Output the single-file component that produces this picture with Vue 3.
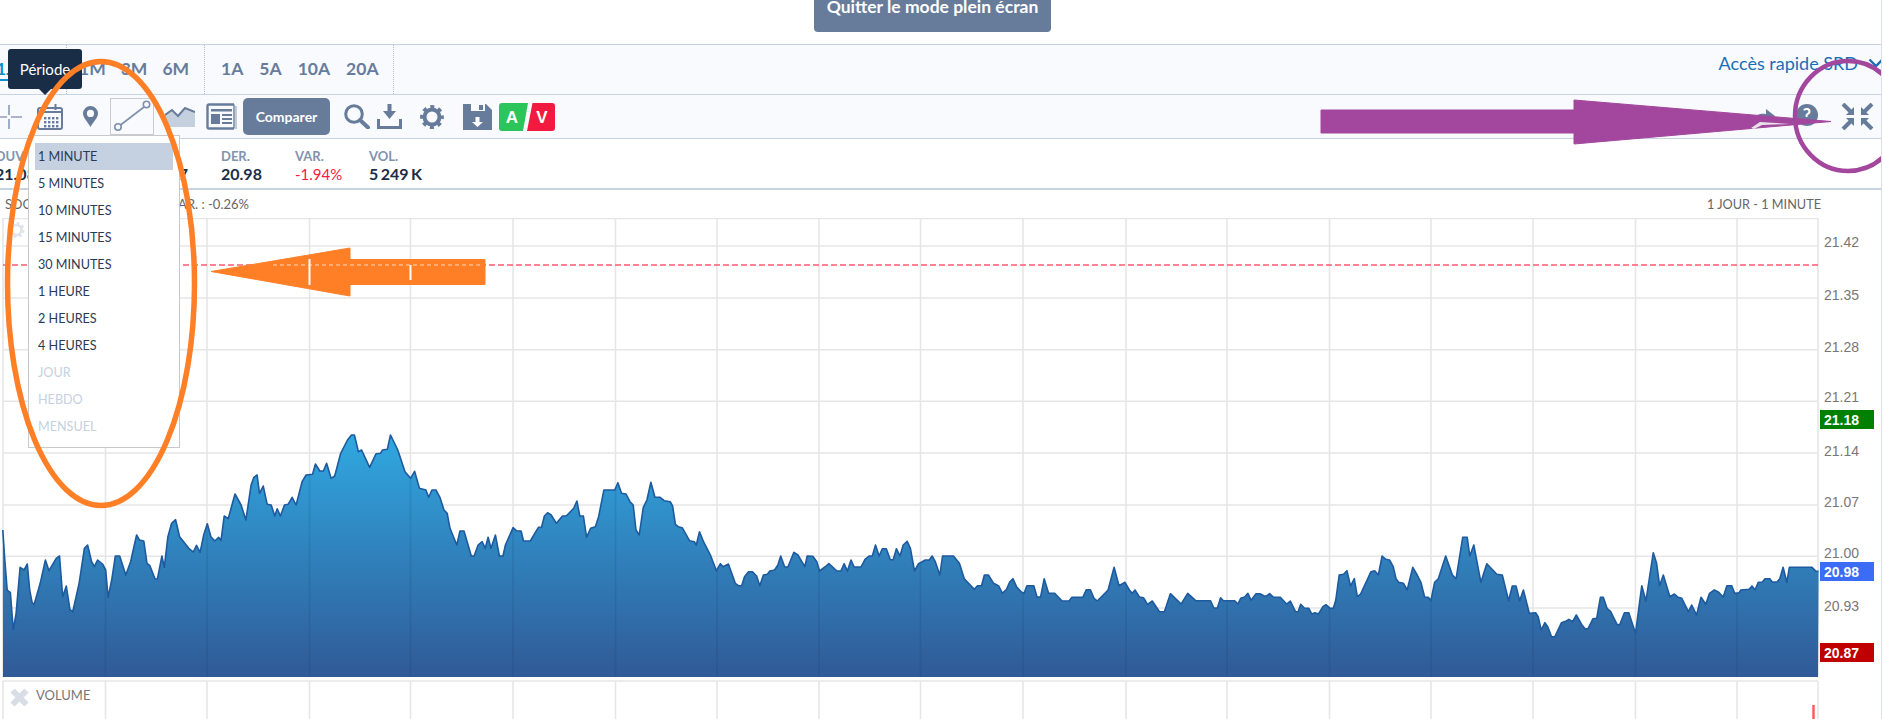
<script setup>
const seg1 = [[7,330],[12,420],[18,510],[26,518],[33,630],[40,580],[50,442],[60,450],[68,432],[74,510],[80,548],[85,553],[100,490],[113,420],[122,452],[140,415],[148,408],[156,530],[165,498],[174,568],[181,576],[197,490],[210,385],[218,375],[228,425],[235,440],[243,420],[255,432],[263,450],[269,532],[278,480],[287,408],[298,408],[313,465],[325,425],[340,345],[347,360],[358,363],[366,430],[373,437],[386,477],[392,476],[403,408],[409,442],[418,350],[427,310],[437,299],[447,350],[470,385],[481,396],[489,376],[498,397],[507,345],[516,311],[525,350],[535,363],[544,352],[550,362],[558,288],[568,296],[585,222],[600,255],[612,300],[625,195],[632,172],[640,165],[646,220],[655,198],[665,253],[675,255],[684,288],[690,266],[698,288],[708,255],[717,253],[727,232],[737,255],[752,185],[762,165],[778,163],[785,132],[796,153],[805,153],[813,130],[824,175],[833,168],[848,100],[865,60],[875,45],[882,45],[892,95],[900,90],[920,142],[936,101],[947,100],[952,90],[964,88],[972,45],[990,90],[1008,155],[1022,175],[1032,154],[1044,205],[1060,210],[1067,232],[1075,210],[1085,210],[1095,232],[1105,270],[1113,280],[1120,325],[1137,375],[1145,333],[1155,333],[1173,408],[1180,408],[1190,375],[1200,365],[1208,385],[1215,352],[1222,385],[1233,345],[1243,408],[1252,408],[1258,375],[1277,323],[1285,332],[1297,333],[1303,363],[1320,363],[1340,322],[1348,321],[1355,288],[1363,278],[1372,285],[1385,310],[1400,288],[1410,287],[1428,265],[1436,243],[1443,288],[1452,288],[1460,352],[1470,325],[1482,320],[1490,290],[1503,210],[1530,210],[1538,188],[1547,220],[1558,222]]
const seg2 = [[0,245],[8,255],[15,330],[23,345],[33,262],[42,240],[52,187],[62,232],[75,232],[85,242],[100,245],[106,258],[113,313],[120,320],[130,323],[148,362],[160,365],[165,375],[173,335],[183,365],[200,405],[215,452],[225,431],[232,440],[245,432],[262,490],[270,497],[278,497],[285,470],[295,455],[305,455],[315,468],[323,497],[332,465],[342,463],[348,453],[360,450],[368,435],[375,408],[385,441],[393,441],[408,397],[418,405],[435,440],[441,408],[455,409],[465,425],[472,453],[485,441],[495,431],[515,453],[525,453],[533,431],[541,453],[550,420],[558,441],[575,441],[585,418],[595,408],[603,408],[611,375],[620,408],[628,386],[638,386],[648,419],[655,419],[663,386],[672,408],[680,375],[690,364],[698,385],[708,453],[718,431],[735,420],[745,420],[752,408],[760,425],[771,465],[778,408],[805,408],[820,430],[832,476],[857,508],[865,497],[875,497],[882,465],[892,465],[905,490],[918,498],[927,520],[937,508],[945,486],[953,476],[962,500],[975,517],[981,520],[988,497],[1005,497],[1013,531],[1022,531],[1031,476],[1042,520],[1057,520],[1075,542],[1093,543],[1100,532],[1127,532],[1136,509],[1146,509],[1155,535],[1163,543],[1190,510],[1205,442],[1217,497],[1232,487],[1243,510],[1250,520],[1257,510],[1268,531],[1278,533],[1288,553],[1300,543],[1318,575],[1330,575],[1345,521],[1372,552],[1388,520],[1408,542],[1445,542],[1453,564],[1462,564],[1470,533],[1477,542],[1505,542],[1513,552],[1520,535],[1530,531],[1538,520],[1546,541],[1558,521]]
const seg3 = [[0,521],[10,527],[18,528],[26,521],[36,531],[55,532],[72,552],[82,543],[96,575],[103,575],[110,553],[120,564],[132,565],[140,582],[148,578],[158,582],[170,560],[178,554],[190,565],[198,565],[205,540],[214,465],[226,463],[235,452],[245,498],[255,476],[263,530],[272,522],[300,455],[310,452],[320,465],[330,408],[340,418],[350,420],[360,440],[368,477],[375,487],[388,490],[398,510],[413,442],[425,465],[435,487],[445,531],[455,532],[462,542],[472,487],[482,476],[502,408],[520,465],[530,476],[548,352],[560,352],[567,408],[578,375],[597,487],[613,431],[640,463],[655,465],[672,542],[682,498],[692,498],[702,542],[712,510],[728,580],[745,578],[752,590],[760,630],[770,608],[778,620],[788,650],[797,650],[815,608],[828,603],[835,598],[845,605],[855,585],[870,615],[880,628],[887,625],[900,596],[910,595],[920,532],[928,532],[938,565],[948,575],[965,613],[972,615],[985,578],[997,578],[1015,640],[1032,497],[1043,543],[1063,398],[1072,430],[1080,497],[1090,465],[1108,530],[1120,522],[1130,532],[1140,535],[1158,575],[1167,555],[1180,585],[1192,532],[1205,553],[1215,520],[1228,510],[1240,517],[1252,531],[1262,497],[1275,497],[1283,520],[1295,518],[1300,510],[1322,508],[1330,498],[1338,510],[1347,487],[1358,486],[1365,476],[1378,476],[1385,487],[1398,485],[1405,476],[1414,442],[1424,487],[1431,442],[1492,442],[1502,453],[1510,454]]

const toPts = (seg, offset, scale) => seg.map(([x, y]) => `${(offset + x / scale).toFixed(1)},${(420 + y / 3).toFixed(1)}`)
const pts = [...toPts(seg1, 0, 2.489), ...toPts(seg2, 630, 2.489), ...toPts(seg3, 1260, 2.703)]
const line = 'M' + pts.join(' L')
const area = line + ' L1818,677 L3,677 Z'

const vLines = [105.5, 207, 309.5, 410.5, 513, 615.5, 717, 819, 920.5, 1023, 1126, 1227, 1329.5, 1431, 1533, 1635.5, 1737]
const hLines = [246, 298, 349.7, 401.3, 453, 505, 556.3, 608]
const axis = [['21.42', 247], ['21.35', 300], ['21.28', 352], ['21.21', 402], ['21.14', 456], ['21.07', 507], ['21.00', 558], ['20.93', 611]]
const tags = [['21.18', 410, '#008000'], ['20.98', 562, '#3c6cf5'], ['20.87', 643, '#c00000']]

const groups = [['1J', '5J'], ['1M', '3M', '6M'], ['1A', '5A', '10A', '20A']]
const stats = [
  { label: 'OUV.', value: '21.08' },
  { label: 'HAUT', value: '21.18' },
  { label: 'BAS', value: '20.87' },
  { label: 'DER.', value: '20.98' },
  { label: 'VAR.', value: '-1.94%', down: true },
  { label: 'VOL.', value: '5 249 K' }
]
const menu = [
  { t: '1 MINUTE', sel: true }, { t: '5 MINUTES' }, { t: '10 MINUTES' }, { t: '15 MINUTES' },
  { t: '30 MINUTES' }, { t: '1 HEURE' }, { t: '2 HEURES' }, { t: '4 HEURES' },
  { t: 'JOUR', off: true }, { t: 'HEBDO', off: true }, { t: 'MENSUEL', off: true }
]
const calDots = []
for (const y of [13, 17, 21]) for (const x of [7, 11, 15, 19]) calDots.push([x, y])
</script>

<template>
  <div class="page">
    <div class="top">
      <button class="quit">Quitter le mode plein écran</button>
    </div>

    <div class="periods">
      <div v-for="(g, i) in groups" :key="i" class="group" :class="'g' + i">
        <span v-for="(p, j) in g" :key="p" class="period" :class="{ on: i === 0 && j === 0 }">{{ p }}</span>
      </div>
      <a class="quick">Accès rapide SRD
        <svg class="chev" width="16" height="10" viewBox="0 0 16 10"><path d="M1.5 1.5 L8 8 L14.5 1.5" fill="none" stroke="#1a6fb5" stroke-width="2.4" /></svg>
      </a>
    </div>

    <div class="tools">
      <svg class="i-cross" width="22" height="24" viewBox="0 0 22 24"><path d="M0 12H7M11 12H22M9 0V10M9 14V24" stroke="#8fa0b9" stroke-width="1.7" fill="none" /></svg>
      <svg class="i-cal" width="26" height="26" viewBox="0 0 26 26">
        <rect x="1" y="4" width="24" height="21" rx="2" fill="none" stroke="#677c9b" stroke-width="2" />
        <path d="M1 8H25" stroke="#677c9b" stroke-width="2" />
        <path d="M7.5 0V6M18.5 0V6" stroke="#677c9b" stroke-width="2" />
        <rect v-for="d in calDots" :key="d.join()" :x="d[0]" :y="d[1]" width="2.4" height="2.4" fill="#677c9b" />
      </svg>
      <svg class="i-pin" width="15" height="21" viewBox="0 0 15 21"><path fill-rule="evenodd" d="M7.5 0A7.5 7.5 0 0 1 15 7.5C15 12 10 16 7.5 21C5 16 0 12 0 7.5A7.5 7.5 0 0 1 7.5 0ZM7.5 3.8a3.6 3.6 0 1 0 0 7.2a3.6 3.6 0 0 0 0-7.2Z" fill="#677c9b" /></svg>
      <div class="linetool">
        <svg width="42" height="35" viewBox="0 0 42 35">
          <path d="M9.5 26L33 8" stroke="#7d90ac" stroke-width="1.6" />
          <circle cx="7" cy="28" r="3.2" fill="none" stroke="#7d90ac" stroke-width="1.6" />
          <circle cx="35.5" cy="5.5" r="3.2" fill="none" stroke="#7d90ac" stroke-width="1.6" />
        </svg>
      </div>
      <svg class="i-area" width="30" height="20" viewBox="0 0 30 20">
        <path d="M0 8L7 3L13 9L20 1L30 5V20H0Z" fill="#c5d0de" />
        <path d="M0 8L7 3L13 9L20 1L30 5" fill="none" stroke="#677c9b" stroke-width="2" />
      </svg>
      <svg class="i-news" width="31" height="27" viewBox="0 0 31 27">
        <path d="M28 1.5H3A1.5 1.5 0 0 0 1.5 3V24A1.5 1.5 0 0 0 3 25.5H28" fill="none" stroke="#677c9b" stroke-width="2.4" />
        <path d="M28 1.5V25.5" stroke="#677c9b" stroke-width="1.4" />
        <path d="M30 3V26" stroke="#a9b6c9" stroke-width="1.4" />
        <rect x="5" y="6" width="21" height="2.5" fill="#677c9b" />
        <rect x="5" y="11" width="9" height="10" fill="#677c9b" />
        <path d="M16 12H26M16 16H26M16 20H26" stroke="#677c9b" stroke-width="2" />
      </svg>
      <button class="compare">Comparer</button>
      <svg class="i-mag" width="26" height="25" viewBox="0 0 26 25">
        <circle cx="10" cy="10" r="8.3" fill="none" stroke="#677c9b" stroke-width="3" />
        <path d="M16 16L24 23.5" stroke="#677c9b" stroke-width="4" stroke-linecap="round" />
      </svg>
      <svg class="i-down" width="25" height="25" viewBox="0 0 25 25">
        <path d="M10.5 0H14.5V7H19L12.5 15L6 7H10.5Z" fill="#677c9b" />
        <path d="M1.5 15V23.5H23.5V15" fill="none" stroke="#677c9b" stroke-width="3" />
      </svg>
      <svg class="i-gear" width="24" height="24" viewBox="0 0 24 24">
        <circle cx="12" cy="12" r="7.5" fill="none" stroke="#677c9b" stroke-width="4" />
        <circle cx="12" cy="12" r="10.2" fill="none" stroke="#677c9b" stroke-width="3.4" stroke-dasharray="4 4.01" stroke-dashoffset="2" />
      </svg>
      <svg class="i-save" width="29" height="26" viewBox="0 0 29 26">
        <path d="M0 0H23L29 6V26H0Z" fill="#677c9b" />
        <rect x="8" y="0" width="14" height="7" fill="#f8fafe" />
        <rect x="16" y="1" width="4" height="5" fill="#677c9b" />
        <path d="M12.5 13H16.5V18H20L14.5 23L9 18H12.5Z" fill="#fff" />
      </svg>
      <svg class="i-av" width="56" height="28" viewBox="0 0 56 28">
        <path d="M3 0H29L24 28H3A3 3 0 0 1 0 25V3A3 3 0 0 1 3 0Z" fill="#2cc55a" />
        <path d="M33.5 0H53A3 3 0 0 1 56 3V25A3 3 0 0 1 53 28H28Z" fill="#f21a3f" />
        <text x="13" y="20" class="avt" text-anchor="middle">A</text>
        <text x="43" y="20" class="avt" text-anchor="middle">V</text>
      </svg>
      <div class="tools-right">
        <svg width="25" height="15" viewBox="0 0 25 15"><path d="M1 14C3 6 10 4 16 5V0L25 7L16 14V9C10 8 5 9 1 14Z" fill="#677c9b" /></svg>
        <span class="help">?</span>
        <svg class="i-comp" width="33" height="27" viewBox="0 0 33 27">
          <g fill="#677c9b" stroke="none">
            <path d="M13 12V4L5 12Z" /><path d="M20 12V4L28 12Z" /><path d="M13 15V23L5 15Z" /><path d="M20 15V23L28 15Z" />
          </g>
          <path d="M2 1L10 9M31 1L23 9M2 26L10 18M31 26L23 18" stroke="#677c9b" stroke-width="4" fill="none" />
        </svg>
      </div>
    </div>

    <div class="stats">
      <div v-for="s in stats" :key="s.label" class="stat">
        <span class="lab">{{ s.label }}</span>
        <span class="val" :class="{ down: s.down }">{{ s.value }}</span>
      </div>
    </div>

    <div class="title">
      <span class="name">SOCIETE GENERALE</span>
      <span>VAR. : -0.26%</span>
      <span class="range">1 JOUR - 1 MINUTE</span>
    </div>

    <svg class="chart" width="1884" height="501" viewBox="0 218 1884 501">
      <defs>
        <linearGradient id="fill" x1="0" y1="0" x2="0" y2="1">
          <stop offset="0" stop-color="#30a8e0" />
          <stop offset="1" stop-color="#305a97" />
        </linearGradient>
        <clipPath id="areaClip"><path :d="area" /></clipPath>
      </defs>
      <g class="grid">
        <path d="M3 218.5H1818" />
        <path v-for="y in hLines" :key="y" :d="`M3 ${y}H1818`" />
        <path v-for="x in vLines" :key="x" :d="`M${x} 218V677`" />
        <path d="M3 218V677M1818 218V677" />
        <path d="M3 681H1818M3 681V719M1818 681V719" />
        <path v-for="x in vLines" :key="'v' + x" :d="`M${x} 681V719`" />
      </g>
      <path d="M3 265H1818" class="dash" />
      <path :d="area" fill="url(#fill)" />
      <g clip-path="url(#areaClip)">
        <path v-for="x in vLines" :key="'c' + x" :d="`M${x} 218V677`" class="under" />
      </g>
      <path :d="line" class="curve" />
      <text v-for="a in axis" :key="a[0]" x="1824" :y="a[1]" class="ax">{{ a[0] }}</text>
      <g v-for="t in tags" :key="t[0]">
        <rect x="1820" :y="t[1]" width="54" height="19" :fill="t[2]" />
        <text x="1824" :y="t[1] + 14.5" class="tag">{{ t[0] }}</text>
      </g>
      <path d="M1813.5 705V719" stroke="#f55" stroke-width="2.4" />
      <path d="M12.5 690.5L26.5 704.5M26.5 690.5L12.5 704.5" stroke="#d8dde6" stroke-width="6" />
      <text x="36" y="700" class="vol">VOLUME</text>
      <circle cx="16.5" cy="230" r="5" fill="none" stroke="#dfe4ec" stroke-width="2.6" />
      <circle cx="16.5" cy="230" r="7" fill="none" stroke="#dfe4ec" stroke-width="2" stroke-dasharray="2.7 2.8" />
    </svg>

    <ul class="menu">
      <li v-for="m in menu" :key="m.t" :class="{ sel: m.sel, off: m.off }">{{ m.t }}</li>
    </ul>

    <div class="tip">Période</div>

    <svg class="marks" width="1884" height="719" viewBox="0 0 1884 719">
      <ellipse cx="101" cy="283.5" rx="93.5" ry="222" fill="none" stroke="#ff7f27" stroke-width="5.5" />
      <path d="M211 271.5L350 248V259.5H485V284.5H350V296Z" fill="#ff7f27" stroke="#ff7f27" stroke-linejoin="round" />
      <path d="M273 265H480" stroke="#ffd9c0" stroke-width="1" stroke-dasharray="4 3" />
      <path d="M309.5 259V285M410.5 265V280" stroke="#fff" stroke-width="2" />
      <path d="M1321 110H1574V100L1831 121.5L1574 144V133H1321Z" fill="#a3479e" stroke="#a3479e" stroke-linejoin="round" />
      <path d="M1751 128L1760 122L1790 124L1762 125L1754 129Z" fill="#e8e4ea" />
      <ellipse cx="1848" cy="116" rx="53" ry="55" fill="none" stroke="#a3479e" stroke-width="4.5" />
    </svg>
  </div>
</template>

<style>
html, body { margin: 0; background: #fff; overflow: hidden; }
</style>

<style scoped>
.page {
  position: relative;
  width: 1881px;
  height: 719px;
  overflow: hidden;
  background: #fff;
  border-right: 1px solid #d9e0ea;
  font-family: Lato, "Open Sans", sans-serif;
  color: #1a2d46;
}
.top { height: 44px; display: flex; justify-content: center; box-sizing: border-box; padding-right: 16px; }
.quit {
  width: 237px; height: 32px; border: 0; border-radius: 0 0 4px 4px; padding: 0 0 18px;
  background: #677c9b; color: #fff; font: 700 17.5px/14px Lato, sans-serif;
}
.periods {
  height: 50px; box-sizing: border-box; display: flex; align-items: stretch;
  background: #f8fafe; border-top: 1px solid #c5d3e3;
}
.group { display: flex; gap: 15px; padding: 14px 15px 0; border-right: 1px dotted #aebcd0; box-sizing: border-box; height: 49px; }
.g0 { width: 67px; padding: 14px 0 0; overflow: hidden; }
.g1 { padding-left: 12px; width: 138px; }
.g2 { width: 189px; gap: 16px; padding-left: 16px; }
.period { font-weight: 700; font-size: 17.5px; line-height: 20px; color: #677c9b; height: 20px; }
.on { color: #0a90d0; border-bottom: 2px solid #0a90d0; margin-left: -4px; }
.quick { margin-left: auto; display: flex; align-items: center; padding: 0 0 13px; color: #1a6fb5; font-size: 18px; }
.chev { margin-left: 10px; margin-right: -3px; }
.tools {
  height: 44px; box-sizing: border-box; display: flex; align-items: center;
  background: #f8fafe; border-top: 1px solid #c5d3e3;
}
.tools > * { flex: none; }
.i-cal { margin-left: 15px; }
.i-pin { margin-left: 20px; }
.linetool { margin-left: 12px; width: 44px; height: 37px; box-sizing: border-box; border: 1px solid #c8ccd2; display: flex; }
.i-area { margin-left: 11px; }
.i-news { margin-left: 11px; }
.compare {
  margin-left: 6px; width: 87px; height: 37px; border: 0; border-radius: 5px; padding: 0;
  background: #677c9b; color: #fff; font: 700 14px Lato, sans-serif;
}
.i-mag { margin-left: 14px; }
.i-down { margin-left: 7px; }
.i-gear { margin-left: 18px; }
.i-save { margin-left: 19px; }
.i-av { margin-left: 7px; }
.avt { font: 700 17px "Liberation Sans", sans-serif; fill: #fff; }
.tools-right { margin-left: auto; display: flex; align-items: center; padding-right: 7px; }
.help {
  margin-left: 21px; width: 22px; height: 22px; border-radius: 50%; background: #677c9b; color: #fff;
  font: 700 18px/22px Lato, sans-serif; text-align: center; margin-bottom: 3px;
}
.i-comp { margin-left: 23px; }
.stats {
  height: 52px; box-sizing: border-box; display: flex; margin-left: -5px;
  background: #fff; border-top: 1px solid #c5d3e3; border-bottom: 2px solid #c5d3e3;
  padding-top: 9px; width: calc(100% + 5px);
}
.stat { width: 74px; display: flex; flex-direction: column; }
.stat:first-child { width: 78px; }
.lab { font-size: 13px; line-height: 16px; font-weight: 700; color: #8093ae; }
.val { font-size: 16px; line-height: 20px; font-weight: 700; color: #1a2d46; white-space: nowrap; word-spacing: -1.5px; }
.down { color: #f21a3f; font-weight: 400; font-size: 15px; }
.title {
  height: 28px; display: flex; align-items: center; padding: 0 60px 0 5px; box-sizing: border-box;
  font-size: 13px; color: #666; white-space: nowrap;
}
.name { width: 165px; overflow: hidden; }
.range { margin-left: auto; font-size: 12.7px; }
.chart { display: block; }
.grid path { stroke: #e6e6e6; stroke-width: 1.6; fill: none; }
.dash { stroke: #ff5a70; stroke-width: 1.5; stroke-dasharray: 6 3; fill: none; }
.under { stroke: rgba(20, 40, 90, 0.12); stroke-width: 1.6; fill: none; }
.curve { fill: none; stroke: #1d5a9e; stroke-width: 1.6; stroke-linejoin: round; }
.ax { font: 14px "Liberation Sans", Arial, sans-serif; fill: #777; }
.tag { font: 700 14px "Liberation Sans", Arial, sans-serif; fill: #fff; }
.vol { font: 13px Lato, sans-serif; fill: #777; }
.menu {
  position: absolute; left: 28px; top: 135px; width: 152px; height: 313px; box-sizing: border-box;
  margin: 0; padding: 7px 6px; list-style: none; background: #fff; border: 1px solid #c9c9c9;
}
.menu li { height: 27px; line-height: 28px; padding-left: 3px; font-size: 12.6px; color: #2a3a55; }
.menu li.sel { background: #c5d1e0; }
.menu li.off { color: #c5d1e0; }
.tip {
  position: absolute; left: 8px; top: 49px; width: 74px; height: 40px; border-radius: 3px;
  background: #1a2d46; color: #fff; font-size: 15px; line-height: 40px; text-align: center;
}
.tip::after {
  content: ""; position: absolute; left: 31px; top: 40px; border: 6px solid transparent;
  border-top-color: #1a2d46; border-bottom: 0;
}
.marks { position: absolute; left: 0; top: 0; pointer-events: none; }
</style>
